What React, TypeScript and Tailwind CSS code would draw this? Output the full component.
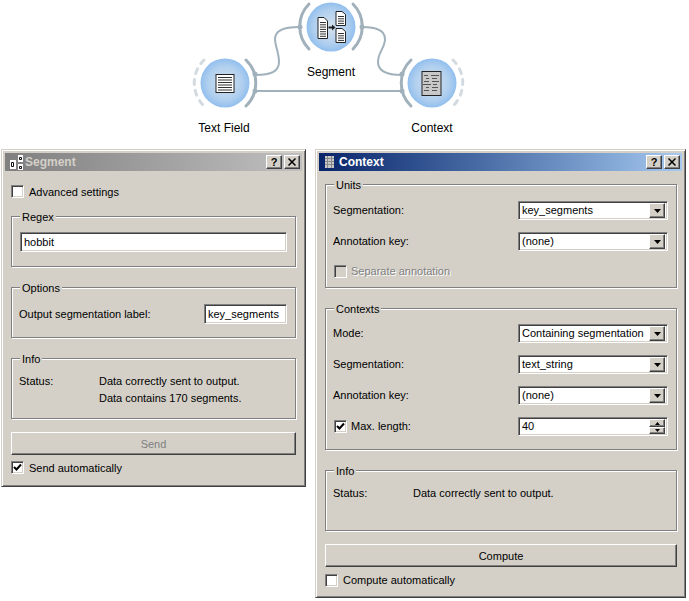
import React from 'react';

const sunken = 'border border-t-[#808080] border-l-[#808080] border-r-white border-b-white shadow-[inset_1px_1px_0_#404040,inset_-1px_-1px_0_#d4d0c8]';
const raised = 'border border-t-white border-l-white border-r-[#404040] border-b-[#404040] shadow-[inset_-1px_-1px_0_#808080]';

const DocLines = ({ x, y, w, n, gap }: { x: number; y: number; w: number; n: number; gap: number }) => (
  <>
    {Array.from({ length: n }).map((_, i) => (
      <line key={i} x1={x} x2={x + w} y1={y + i * gap + 0.5} y2={y + i * gap + 0.5} stroke="#333" strokeWidth="1" />
    ))}
  </>
);

const Diagram = () => (
  <svg width="689" height="145" viewBox="0 0 689 145" className="absolute left-0 top-0">
    <defs>
      <radialGradient id="node">
        <stop offset="0%" stopColor="#d6e2ef" />
        <stop offset="70%" stopColor="#b0cfee" />
        <stop offset="100%" stopColor="#92bfee" />
      </radialGradient>
    </defs>

    {/* links */}
    <g fill="none" stroke="#a0b1bb" strokeWidth="2">
      <path d="M255 75 C272 75 279 71 279 62 C279 52 275 46 275 39 C275 31 283 27 299 27" />
      <path d="M362 27 C378 27 385 31 385 39 C385 48 378 52 378 62 C378 70 386 75 402 75" />
      <path d="M255 91 L402 91" />
    </g>

    {/* channel arcs */}
    <g fill="none" stroke="#a0b1bb" strokeWidth="3" strokeLinecap="round">
      <path d="M246 60 A32 32 0 0 1 246 106" />
      <path d="M411 60 A32 32 0 0 0 411 106" />
      <path d="M309 4 A32 32 0 0 0 309 49" />
      <path d="M353 4 A32 32 0 0 1 353 49" />
    </g>
    <g fill="none" stroke="#d3dbe0" strokeWidth="3" strokeLinecap="round" strokeDasharray="5 6">
      <path d="M204 60 A32 32 0 0 0 204 106" />
      <path d="M453 60 A32 32 0 0 1 453 106" />
    </g>
    <g fill="#a0b1bb">
      <circle cx="255" cy="74" r="2.5" />
      <circle cx="255" cy="91" r="2.5" />
      <circle cx="402" cy="74" r="2.5" />
      <circle cx="402" cy="91" r="2.5" />
      <circle cx="300" cy="27" r="2.5" />
      <circle cx="362" cy="27" r="2.5" />
    </g>

    {/* nodes */}
    <circle cx="225" cy="83" r="24.5" fill="url(#node)" />
    <circle cx="331" cy="27" r="24.5" fill="url(#node)" />
    <circle cx="432" cy="83" r="24.5" fill="url(#node)" />

    {/* text field icon */}
    <rect x="216" y="74.5" width="18" height="18" fill="#fff" stroke="#222" />
    <DocLines x={218} y={77} w={14} n={6} gap={2.5} />

    {/* context icon */}
    <rect x="422" y="71.5" width="19" height="24" fill="#c8c8c8" stroke="#222" />
    <g stroke="#555" strokeWidth="1">
      <path d="M424 75.5h4M431 75.5h8M426 78.5h3M432 78.5h5M424 81.5h5M432 81.5h7M423 84.5h8M433 84.5h4M426 87.5h3M432 87.5h6M424 90.5h5M432 90.5h5" />
    </g>

    {/* segment icon */}
    <path d="M318 17.5H324L327.5 21V38.5H318Z" fill="#fff" stroke="#222" />
    <DocLines x={320} y={22} w={6} n={7} gap={2.3} />
    <path d="M328.5 27.5H333" stroke="#222" strokeWidth="2" />
    <path d="M332 24.5L335.5 27.5L332 30.5Z" fill="#222" />
    <path d="M336 11.5H342L345.5 14.5V25.5H336Z" fill="#fff" stroke="#222" />
    <DocLines x={338} y={16} w={6} n={4} gap={2.3} />
    <path d="M336 28.5H342L345.5 31.5V42.5H336Z" fill="#fff" stroke="#222" />
    <DocLines x={338} y={33} w={6} n={4} gap={2.3} />
  </svg>
);

const NodeLabel = ({ children, className }: { children: React.ReactNode; className: string }) => (
  <div className={`absolute w-[80px] text-center text-[12px] leading-[14px] text-black ${className}`}>{children}</div>
);

const TitleButton = ({ children }: { children: React.ReactNode }) => (
  <div className={`flex h-[14px] w-[16px] items-center justify-center bg-[#d4d0c8] text-[11px] font-bold leading-none text-black ${raised}`}>
    {children}
  </div>
);

const Win = ({
  title,
  icon,
  active,
  className,
  children,
}: {
  title: string;
  icon: React.ReactNode;
  active?: boolean;
  className: string;
  children: React.ReactNode;
}) => (
  <div className={`absolute flex flex-col border border-t-[#d4d0c8] border-l-[#d4d0c8] border-r-[#404040] border-b-[#404040] bg-[#d4d0c8] p-[3px] shadow-[inset_1px_1px_0_#fff,inset_-1px_-1px_0_#808080] ${className}`}>
    <div
      className={`flex h-[18px] shrink-0 items-center pl-[3px] pr-[2px] ${
        active ? 'bg-gradient-to-r from-[#0a246a] to-[#a6caf0] text-white' : 'bg-gradient-to-r from-[#808080] to-[#c0c0c0] text-[#d4d0c8]'
      }`}
    >
      {icon}
      <span className="ml-[2px] flex-1 text-[12px] font-bold leading-none">{title}</span>
      <div className="flex gap-[2px]">
        <TitleButton>?</TitleButton>
        <TitleButton>
          <svg width="8" height="8" viewBox="0 0 8 8">
            <path d="M0.5 0.5L7.5 7.5M7.5 0.5L0.5 7.5" stroke="#000" strokeWidth="1.5" />
          </svg>
        </TitleButton>
      </div>
    </div>
    {children}
  </div>
);

const Group = ({ title, className, children }: { title: string; className: string; children: React.ReactNode }) => (
  <div className={`relative border border-[#808080] shadow-[1px_1px_0_#fff,inset_1px_1px_0_#fff] ${className}`}>
    <div className="absolute left-[8px] top-[-7px] bg-[#d4d0c8] px-[2px] text-[11px] leading-[14px] text-black">{title}</div>
    {children}
  </div>
);

const Check = ({ checked, disabled, label, labelGap = 'ml-[4px]' }: { checked?: boolean; disabled?: boolean; label: string; labelGap?: string }) => (
  <div className="flex h-[13px] items-center">
    <div className={`flex h-[13px] w-[13px] items-center justify-center ${disabled ? 'bg-[#d4d0c8]' : 'bg-white'} ${sunken}`}>
      {checked && (
        <svg width="9" height="9" viewBox="0 0 9 9">
          <path d="M1 4L3.5 6.5L8 1.5" fill="none" stroke="#000" strokeWidth="2" />
        </svg>
      )}
    </div>
    <span className={`text-[11px] leading-[13px] ${labelGap} ${disabled ? 'text-[#808080] [text-shadow:1px_1px_0_#fff]' : 'text-black'}`}>{label}</span>
  </div>
);

const Combo = ({ value }: { value: string }) => (
  <div className={`flex h-[19px] w-[150px] items-center bg-white pl-[3px] pr-[2px] ${sunken}`}>
    <span className="flex-1 text-[11px] leading-none text-black">{value}</span>
    <div className={`flex h-[15px] w-[16px] items-center justify-center bg-[#d4d0c8] ${raised}`}>
      <svg width="7" height="4" viewBox="0 0 7 4">
        <path d="M0 0H7L3.5 4Z" fill="#000" />
      </svg>
    </div>
  </div>
);

const Spin = ({ value }: { value: string }) => (
  <div className={`flex h-[19px] w-[150px] items-center bg-white pl-[3px] pr-[2px] ${sunken}`}>
    <span className="flex-1 text-[11px] leading-none text-black">{value}</span>
    <div className="flex w-[16px] flex-col">
      <div className={`flex h-[8px] items-center justify-center bg-[#d4d0c8] ${raised}`}>
        <svg width="5" height="3" viewBox="0 0 5 3">
          <path d="M0 3H5L2.5 0Z" fill="#000" />
        </svg>
      </div>
      <div className={`flex h-[7px] items-center justify-center bg-[#d4d0c8] ${raised}`}>
        <svg width="5" height="3" viewBox="0 0 5 3">
          <path d="M0 0H5L2.5 3Z" fill="#000" />
        </svg>
      </div>
    </div>
  </div>
);

const Row = ({ label, children }: { label: React.ReactNode; children: React.ReactNode }) => (
  <div className="flex h-[19px] items-center justify-between">
    {typeof label === 'string' ? <span className="ml-[-1px] text-[11px] leading-none text-black">{label}</span> : label}
    {children}
  </div>
);

const PushButton = ({ label, disabled }: { label: string; disabled?: boolean }) => (
  <div className={`flex h-[23px] items-center justify-center pt-[1px] text-[11px] ${disabled ? 'text-[#808080]' : 'text-black'} ${raised}`}>{label}</div>
);

const SegmentIcon = () => (
  <svg width="15" height="17" viewBox="0 0 15 17" className="shrink-0">
    <g fill="#fff">
      <rect x="2" y="6" width="6" height="9" />
      <rect x="10" y="1" width="6" height="7" />
      <rect x="10" y="10" width="6" height="6" />
    </g>
    <path d="M3.5 8.5h2v4h-2zM11.5 3.5h2v2h-2zM11.5 12.5h2v2h-2z" fill="none" stroke="#111" />
  </svg>
);

const ContextIcon = () => (
  <svg width="15" height="14" viewBox="0 0 15 14" className="shrink-0">
    <rect x="3" y="1" width="9" height="12" fill="#c8c8c8" />
    <path d="M3 3.5h9M3 6.5h9M3 9.5h9M5.5 1v12M9.5 1v12" stroke="#8a8a8a" />
  </svg>
);

export default function App() {
  return (
    <div className="relative h-[601px] w-[689px] overflow-hidden bg-white font-['Liberation_Sans',Arial,sans-serif]">
      <Diagram />
      <NodeLabel className="left-[291px] top-[65px]">Segment</NodeLabel>
      <NodeLabel className="left-[184px] top-[121px]">Text Field</NodeLabel>
      <NodeLabel className="left-[392px] top-[121px]">Context</NodeLabel>

      {/* Segment widget */}
      <Win title="Segment" icon={<SegmentIcon />} className="left-[1px] top-[149px] h-[338px] w-[305px]">
        <div className="flex flex-1 flex-col px-[6px] pt-[14px]">
          <Check label="Advanced settings" labelGap="ml-[5px] pt-[1px]" />
          <Group title="Regex" className="mt-[18px] h-[51px] px-[8px] pt-[15px]">
            <div className={`flex h-[20px] items-center bg-white pl-[3px] text-[11px] text-black ${sunken}`}>hobbit</div>
          </Group>
          <Group title="Options" className="mt-[20px] h-[51px] px-[8px] pt-[16px]">
            <div className="flex h-[20px] items-center justify-between text-[11px] text-black">
              <span className="ml-[-1px]">Output segmentation label:</span>
              <div className={`flex h-[20px] w-[83px] items-center bg-white pl-[3px] ${sunken}`}>key_segments</div>
            </div>
          </Group>
          <Group title="Info" className="mt-[20px] h-[61px] px-[7px] pt-[14px]">
            <div className="grid grid-cols-[80px_1fr] text-[11px] leading-[17px] text-black">
              <span>Status:</span>
              <span>Data correctly sent to output.</span>
              <span />
              <span>Data contains 170 segments.</span>
            </div>
          </Group>
          <div className="mt-[13px]">
            <PushButton label="Send" disabled />
          </div>
          <div className="mt-[6px]">
            <Check checked label="Send automatically" labelGap="ml-[5px] pt-[1px]" />
          </div>
        </div>
      </Win>

      {/* Context widget */}
      <Win title="Context" icon={<ContextIcon />} active className="left-[315px] top-[149px] h-[449px] w-[371px]">
        <div className="flex flex-1 flex-col pl-[6px] pr-[5px] pt-[13px]">
          <Group title="Units" className="h-[104px] px-[8px] pt-[16px]">
            <div className="flex flex-col gap-[12px]">
              <Row label="Segmentation:"><Combo value="key_segments" /></Row>
              <Row label="Annotation key:"><Combo value="(none)" /></Row>
            </div>
            <div className="mt-[14px]">
              <Check disabled label="Separate annotation" />
            </div>
          </Group>
          <Group title="Contexts" className="mt-[20px] h-[142px] px-[8px] pt-[15px]">
            <div className="flex flex-col gap-[12px]">
              <Row label="Mode:"><Combo value="Containing segmentation" /></Row>
              <Row label="Segmentation:"><Combo value="text_string" /></Row>
              <Row label="Annotation key:"><Combo value="(none)" /></Row>
              <Row label={<Check checked label="Max. length:" />}><Spin value="40" /></Row>
            </div>
          </Group>
          <Group title="Info" className="mt-[20px] h-[61px] px-[8px] pt-[14px]">
            <div className="ml-[-1px] grid grid-cols-[80px_1fr] text-[11px] leading-[17px] text-black">
              <span>Status:</span>
              <span>Data correctly sent to output.</span>
            </div>
          </Group>
          <div className="mt-[13px]">
            <PushButton label="Compute" />
          </div>
          <div className="mt-[7px]">
            <Check label="Compute automatically" labelGap="ml-[5px]" />
          </div>
        </div>
      </Win>
    </div>
  );
}
